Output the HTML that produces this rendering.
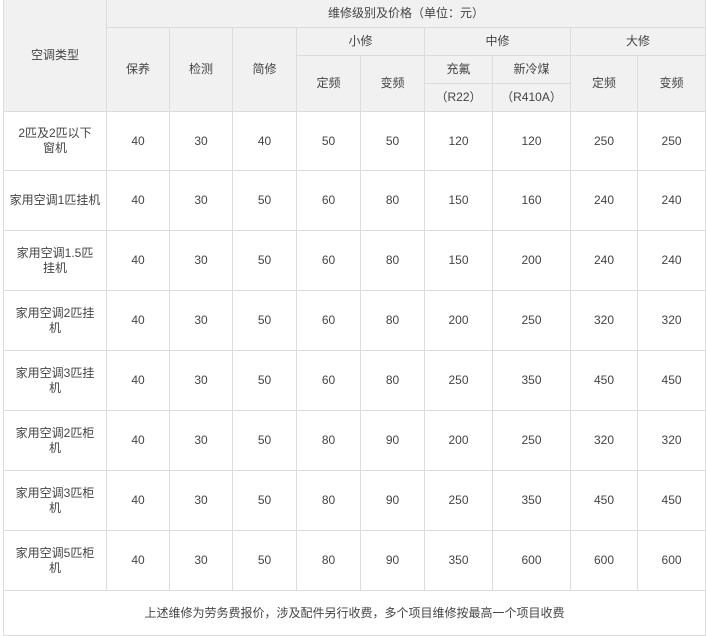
<!DOCTYPE html>
<html><head><meta charset="utf-8"><style>
body{margin:0;background:#fff;width:706px;height:633px;overflow:hidden}
table{position:absolute;left:3px;top:-1px;border-collapse:collapse;table-layout:fixed;width:702px;font-family:"Liberation Sans","WenQuanYi Zen Hei","Noto Sans CJK SC",sans-serif;font-size:12px;color:#444}
td{border:1px solid #dcdcdc;text-align:center;vertical-align:middle;padding:0;line-height:15px}
.h td,td.h{background:#f1f1f1}
tr.d td{height:59px}
tr.f td{height:58px}
</style></head><body>
<table>
<colgroup><col style="width:103px"><col style="width:63px"><col style="width:63px"><col style="width:64px"><col style="width:64px"><col style="width:64px"><col style="width:68px"><col style="width:78px"><col style="width:67px"><col style="width:68px"></colgroup>
<tr class="h"><td rowspan="4">空调类型</td><td colspan="9" style="height:27px">维修级别及价格（单位：元）</td></tr>
<tr class="h"><td rowspan="3">保养</td><td rowspan="3">检测</td><td rowspan="3">简修</td><td colspan="2" style="height:27px">小修</td><td colspan="2">中修</td><td colspan="2">大修</td></tr>
<tr class="h"><td rowspan="2">定频</td><td rowspan="2">变频</td><td style="height:27px">充氟</td><td>新冷煤</td><td rowspan="2">定频</td><td rowspan="2">变频</td></tr>
<tr class="h"><td style="height:27px">（R22）</td><td>（R410A）</td></tr>
<tr class="d f"><td>2匹及2匹以下<br>窗机</td><td>40</td><td>30</td><td>40</td><td>50</td><td>50</td><td>120</td><td>120</td><td>250</td><td>250</td></tr>
<tr class="d"><td>家用空调1匹挂机</td><td>40</td><td>30</td><td>50</td><td>60</td><td>80</td><td>150</td><td>160</td><td>240</td><td>240</td></tr>
<tr class="d"><td>家用空调1.5匹<br>挂机</td><td>40</td><td>30</td><td>50</td><td>60</td><td>80</td><td>150</td><td>200</td><td>240</td><td>240</td></tr>
<tr class="d"><td>家用空调2匹挂<br>机</td><td>40</td><td>30</td><td>50</td><td>60</td><td>80</td><td>200</td><td>250</td><td>320</td><td>320</td></tr>
<tr class="d"><td>家用空调3匹挂<br>机</td><td>40</td><td>30</td><td>50</td><td>60</td><td>80</td><td>250</td><td>350</td><td>450</td><td>450</td></tr>
<tr class="d"><td>家用空调2匹柜<br>机</td><td>40</td><td>30</td><td>50</td><td>80</td><td>90</td><td>200</td><td>250</td><td>320</td><td>320</td></tr>
<tr class="d"><td>家用空调3匹柜<br>机</td><td>40</td><td>30</td><td>50</td><td>80</td><td>90</td><td>250</td><td>350</td><td>450</td><td>450</td></tr>
<tr class="d"><td>家用空调5匹柜<br>机</td><td>40</td><td>30</td><td>50</td><td>80</td><td>90</td><td>350</td><td>600</td><td>600</td><td>600</td></tr>
<tr><td colspan="10" style="height:44px">上述维修为劳务费报价，涉及配件另行收费，多个项目维修按最高一个项目收费</td></tr>
</table>
</body></html>
